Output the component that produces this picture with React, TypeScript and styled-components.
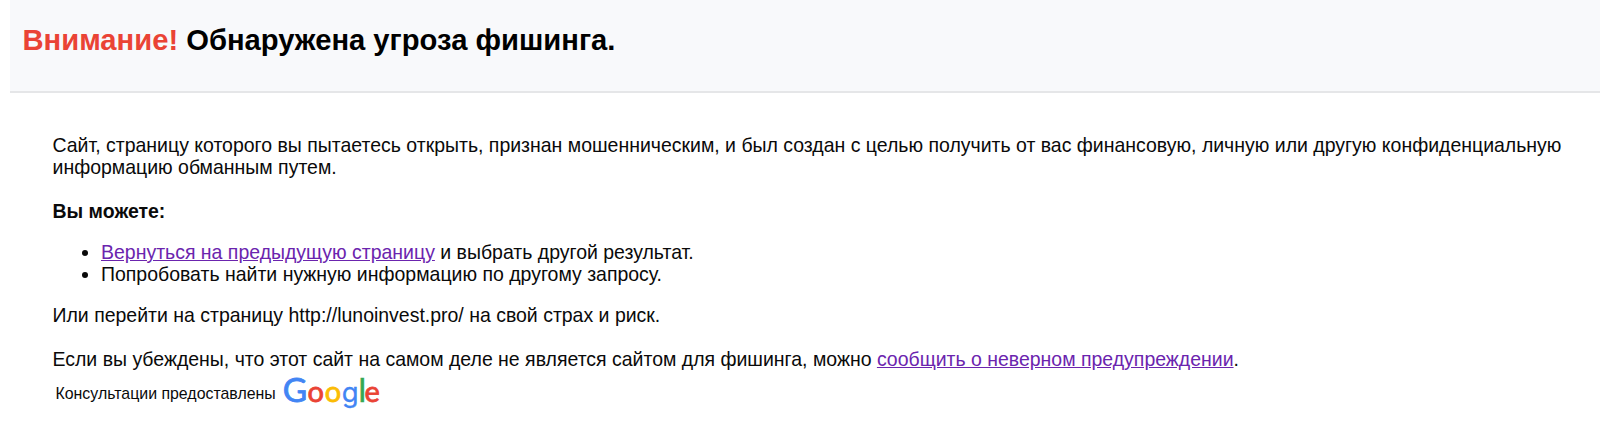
import styled, { createGlobalStyle } from 'styled-components';

const GlobalStyle = createGlobalStyle`
  body {
    background-color: #ffffff;
    color: #0a0a0a;
    font-family: "Liberation Sans", Arial, sans-serif;
    font-size: 19.48px;
    line-height: 22px;
    margin: 0;
    overflow: hidden;
  }
`;

const Page = styled('main')`
  display: flex;
  flex-direction: column;
  height: 446px;
  padding-left: 10px;
`;

const Header = styled('header')`
  background-color: #f8f9fb;
  border-bottom: 2px solid #e5e6e8;
  box-sizing: border-box;
  height: 93px;
  padding: 23px 0 0 12.5px;
`;

const Title = styled('h1')`
  color: #000000;
  font-size: 29.2px;
  line-height: 34px;
  margin: 0;
  white-space: nowrap;
`;

const Attention = styled('span')`
  color: #ea4335;
`;

const Content = styled('section')`
  display: flex;
  flex-direction: column;
  padding: 41px 0 0 42.5px;
`;

const Paragraph = styled('p')<{ gap: number; isBold?: boolean }>`
  font-weight: ${ props => props.isBold ? 'bold' : 'normal' };
  margin: 0 0 ${ props => props.gap }px;
  white-space: nowrap;
`;

const Options = styled('ul')`
  margin: 0 0 19px;
  padding-left: 48.5px;
`;

const Link = styled('a')`
  color: #6b24ae;
  text-decoration: underline;
`;

const Advisory = styled('footer')`
  align-items: flex-start;
  display: flex;
  font-size: 15.9px;
  gap: 8px;
  padding-left: 3px;
`;

const AdvisoryText = styled('span')`
  line-height: 20px;
  padding-top: 10px;
  white-space: nowrap;
`;

const Wordmark = styled('svg')`
  font-family: Lato, "Open Sans", sans-serif;
  height: 48px;
  margin-top: -8px;
  overflow: visible;
  width: 100px;
`;

const LOGO_LETTERS = [
  { char: 'G', x: -1.2, size: 33.5, color: '#4285F4' },
  { char: 'o', x: 23.5, size: 29, color: '#EA4335' },
  { char: 'o', x: 40.7, size: 29, color: '#FBBC05' },
  { char: 'g', x: 57.8, size: 27.5, color: '#4285F4', font: 'Inter', stroke: 0.3 },
  { char: 'l', x: 74.5, size: 32, color: '#34A853', stroke: 0.6 },
  { char: 'e', x: 80.6, size: 29, color: '#EA4335' },
];

const App: React.FC = () => {
  return (
    <>
      <GlobalStyle />
      <Page>
        <Header>
          <Title><Attention>Внимание!</Attention> Обнаружена угроза фишинга.</Title>
        </Header>
        <Content>
          <Paragraph gap={ 22 }>
            Сайт, страницу которого вы пытаетесь открыть, признан мошенническим, и был создан с целью получить от вас финансовую, личную или другую конфиденциальную
            <br />
            информацию обманным путем.
          </Paragraph>
          <Paragraph gap={ 19 } isBold>Вы можете:</Paragraph>
          <Options>
            <li><Link>Вернуться на предыдущую страницу</Link> и выбрать другой результат.</li>
            <li>Попробовать найти нужную информацию по другому запросу.</li>
          </Options>
          <Paragraph gap={ 22 }>Или перейти на страницу http://lunoinvest.pro/ на свой страх и риск.</Paragraph>
          <Paragraph gap={ 4 }>
            Если вы убеждены, что этот сайт на самом деле не является сайтом для фишинга, можно <Link>сообщить о неверном предупреждении</Link>.
          </Paragraph>
          <Advisory>
            <AdvisoryText>Консультации предоставлены</AdvisoryText>
            <Wordmark viewBox="0 0 100 48" role="img" aria-label="Google">
              <text y="36">
                {
                  LOGO_LETTERS.map(({ char, x, size, color, font, stroke = 0.8 }, index) =>
                    <tspan key={ index } x={ x } fontSize={ size } fontFamily={ font } fill={ color } stroke={ color } strokeWidth={ stroke }>{ char }</tspan>
                  )
                }
              </text>
            </Wordmark>
          </Advisory>
        </Content>
      </Page>
    </>
  );
};

export default App;
